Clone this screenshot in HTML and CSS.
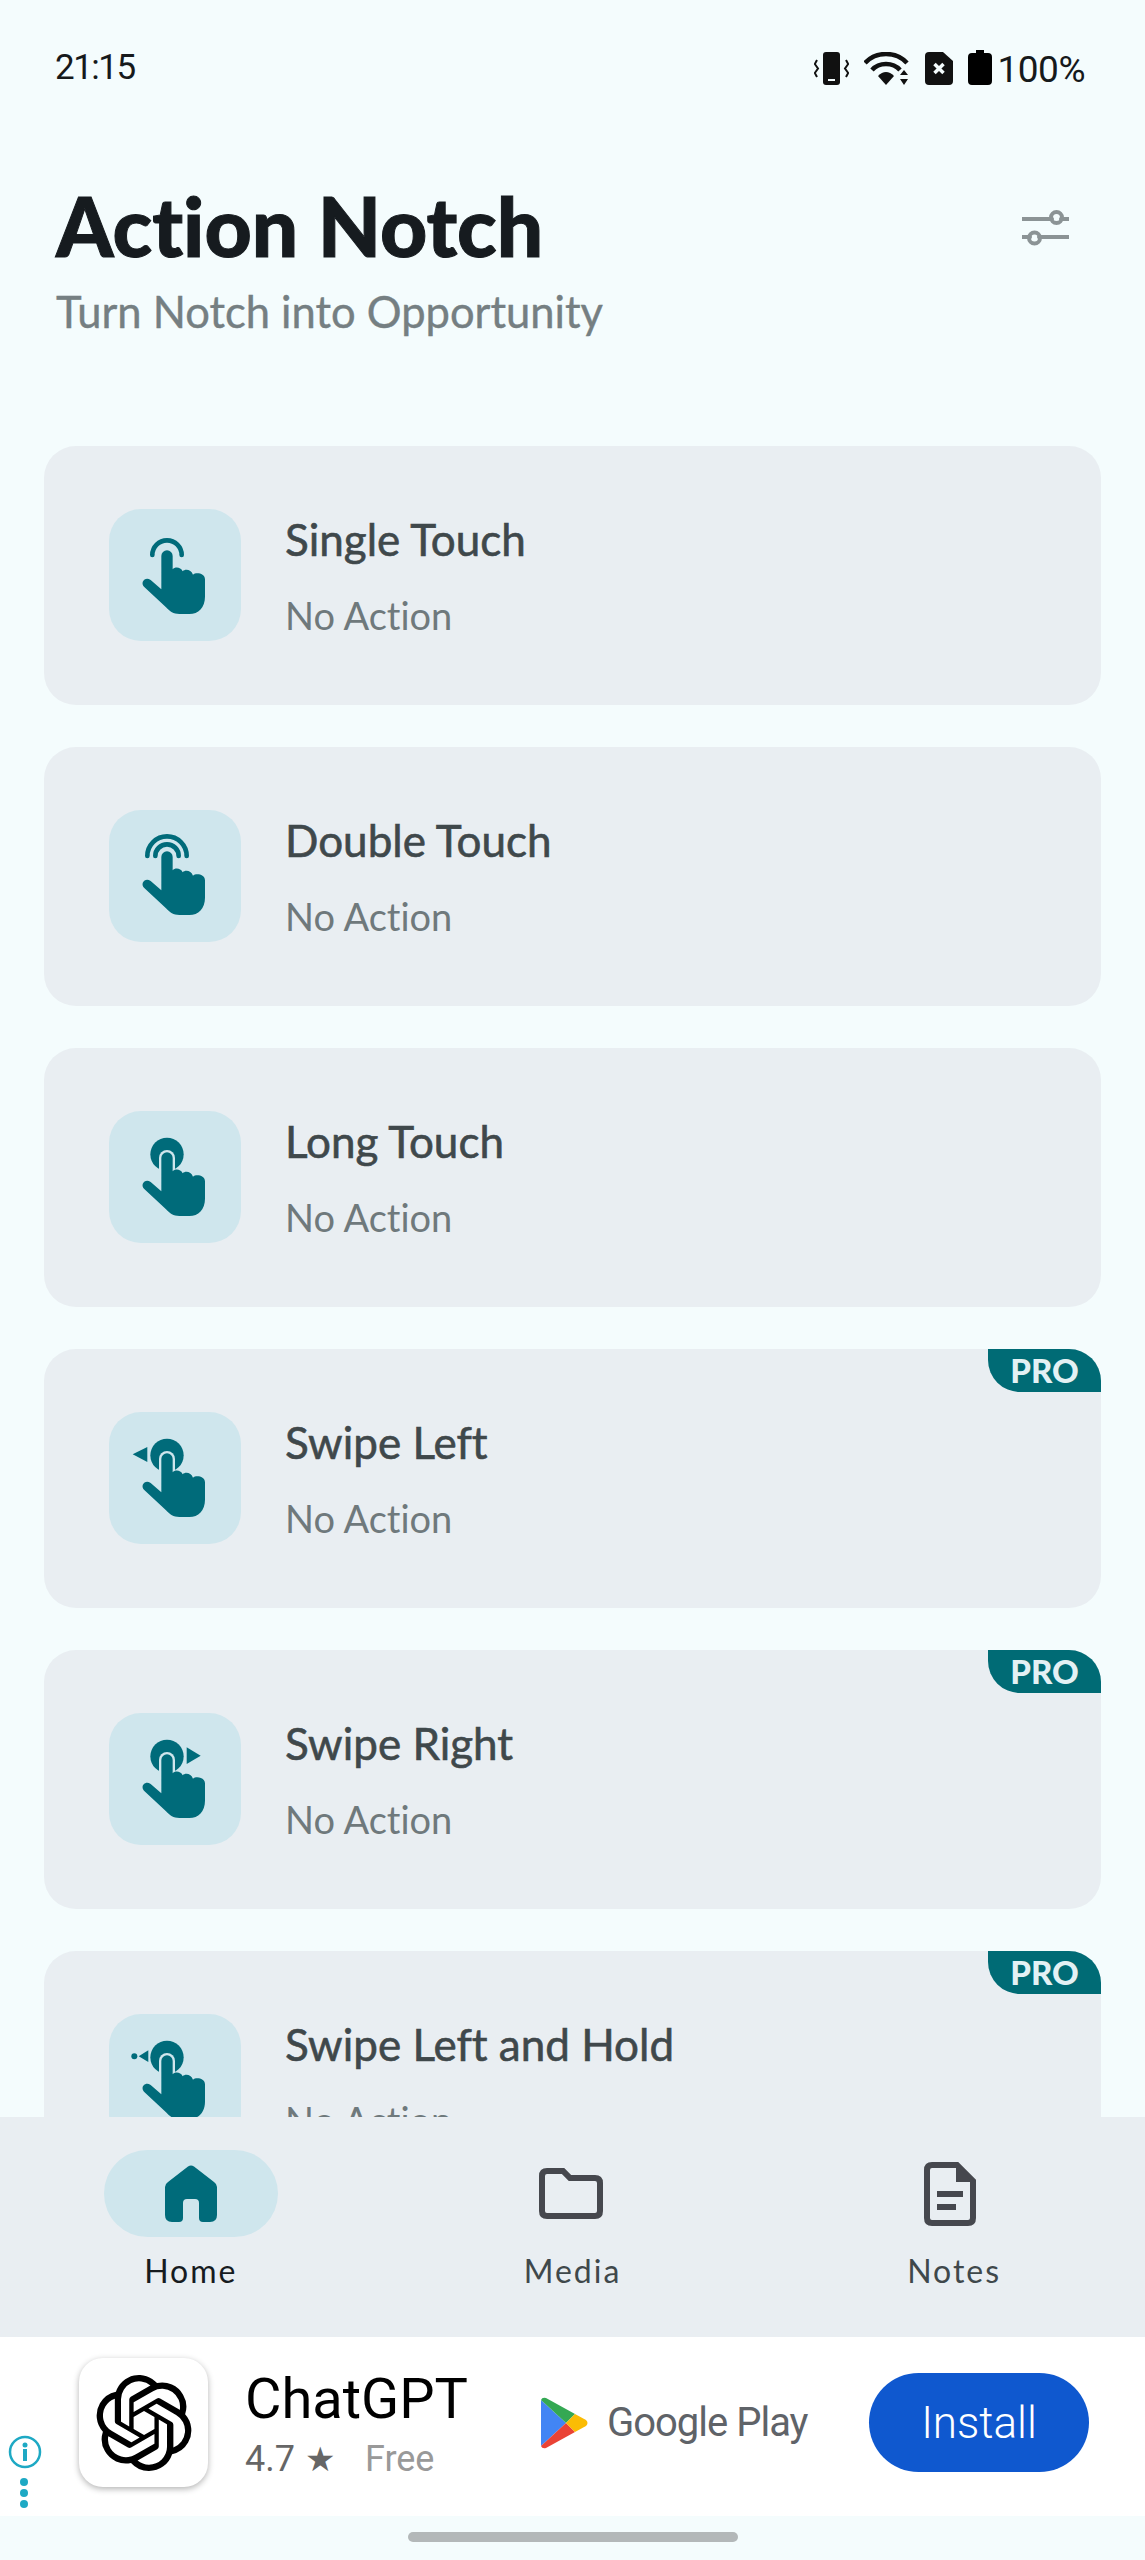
FILE: index.html
```html
<!doctype html>
<html lang="en">

<head>
	<meta charset="UTF-8" />
	<meta name="viewport" content="width=device-width, initial-scale=1.0" />
	<title>Action Notch</title>
	<link rel="stylesheet" href="styles.css">
</head>

<body>
	<svg class="defs" width="0" height="0">
		<symbol id="hand" viewBox="57 57 396 396">
			<path d="M214 198A17 17 0 0 1 248 198L248 238C254 230 272 230 278 244C285 236 304 238 309 254C318 246 345 250 345 268L345 320C345 352 325 372 298 372L268 372C250 372 240 365 228 352L162 290C150 278 165 258 182 270L214 298Z" />
		</symbol>
	</svg>

	<div class="status-bar">
		<span class="time">21:15</span>
		<div class="status-icons">
			<svg class="ic-vibrate" width="35" height="33" viewBox="0 0 35 33">
				<rect x="9" y="0" width="17" height="33" rx="3" />
				<rect x="14" y="27" width="7" height="2" fill="#f4fcfd" />
				<path d="M3 8L0.8 12L4 16.5L0.8 21L3 25M32 8L34.2 12L31 16.5L34.2 21L32 25" fill="none" stroke="#111" stroke-width="2" />
			</svg>
			<svg class="ic-wifi" width="45" height="33" viewBox="0 0 45 33">
				<g fill="none" stroke="#111" stroke-width="4.500">
					<path d="M1 11C12 -1 32 -1 43 11" />
					<path d="M8 18C15 10 29 10 36 18" />
				</g>
				<path d="M14 24C19 18.500 25 18.500 30 24L22 33Z" />
				<path d="M40 18L44 23L36 23ZM40 33L44 27L36 27Z" />
			</svg>
			<svg class="ic-sim" width="28" height="33" viewBox="0 0 28 33">
				<path d="M4 0L18 0L28 9L28 29Q28 33 24 33L4 33Q0 33 0 29L0 4Q0 0 4 0Z" />
				<path d="M9.500 12L18.500 21M18.500 12L9.500 21" stroke="#f4fcfd" stroke-width="3.500" />
			</svg>
			<svg class="ic-battery" width="24" height="35" viewBox="0 0 24 35">
				<path d="M8 0L16 0L16 3L20 3Q24 3 24 7L24 31Q24 35 20 35L4 35Q0 35 0 31L0 7Q0 3 4 3L8 3Z" fill="#000" />
			</svg>
			<span class="battery-text">100%</span>
		</div>
	</div>

	<header class="app-header">
		<div>
			<h1>Action Notch</h1>
			<p>Turn Notch into Opportunity</p>
		</div>
		<svg class="ic-settings" width="47" height="36" viewBox="0 0 47 36">
			<g fill="none" stroke="#8b9395" stroke-width="4">
				<path d="M0 9H30M39 9H47M0 27H8M17 27H47" stroke-linecap="round" />
				<circle cx="34.500" cy="7.500" r="5.500" />
				<circle cx="12.500" cy="28" r="5.500" />
			</g>
		</svg>
	</header>

	<main class="action-list">
		<div class="action-card">
			<div class="icon-box">
				<svg viewBox="57 57 396 396">
					<path d="M187 195A44 44 0 0 1 275 195" class="arc" />
					<use href="#hand" x="57" y="57" width="396" height="396" />
				</svg>
			</div>
			<div class="action-text">
				<h2>Single Touch</h2>
				<p>No Action</p>
			</div>
		</div>

		<div class="action-card">
			<div class="icon-box">
				<svg viewBox="57 57 396 396">
					<path d="M172 195A59 59 0 0 1 290 195" class="arc" />
					<path d="M196 195A35 35 0 0 1 266 195" class="arc" />
					<use href="#hand" x="57" y="57" width="396" height="396" />
				</svg>
			</div>
			<div class="action-text">
				<h2>Double Touch</h2>
				<p>No Action</p>
			</div>
		</div>

		<div class="action-card">
			<div class="icon-box">
				<svg viewBox="57 57 396 396">
					<circle cx="231" cy="187" r="50" />
					<path d="M231 198V280" class="halo" />
					<use href="#hand" x="57" y="57" width="396" height="396" />
				</svg>
			</div>
			<div class="action-text">
				<h2>Long Touch</h2>
				<p>No Action</p>
			</div>
		</div>

		<div class="action-card">
			<span class="pro-badge">PRO</span>
			<div class="icon-box">
				<svg viewBox="57 57 396 396">
					<circle cx="231" cy="187" r="50" />
					<path d="M128 184L172 162L172 207Z" />
					<path d="M231 198V280" class="halo" />
					<use href="#hand" x="57" y="57" width="396" height="396" />
				</svg>
			</div>
			<div class="action-text">
				<h2>Swipe Left</h2>
				<p>No Action</p>
			</div>
		</div>

		<div class="action-card">
			<span class="pro-badge">PRO</span>
			<div class="icon-box">
				<svg viewBox="57 57 396 396">
					<circle cx="231" cy="187" r="50" />
					<path d="M290 160L290 210L332 185Z" />
					<path d="M231 198V280" class="halo" />
					<use href="#hand" x="57" y="57" width="396" height="396" />
				</svg>
			</div>
			<div class="action-text">
				<h2>Swipe Right</h2>
				<p>No Action</p>
			</div>
		</div>

		<div class="action-card">
			<span class="pro-badge">PRO</span>
			<div class="icon-box">
				<svg viewBox="57 57 396 396">
					<circle cx="231" cy="187" r="50" />
					<path d="M146 184L175 166L175 201Z" />
					<circle cx="133" cy="184" r="9" />
					<path d="M231 198V280" class="halo" />
					<use href="#hand" x="57" y="57" width="396" height="396" />
				</svg>
			</div>
			<div class="action-text">
				<h2>Swipe Left and Hold</h2>
				<p>No Action</p>
			</div>
		</div>
	</main>

	<nav class="bottom-nav">
		<div class="nav-item active">
			<div class="nav-pill">
				<svg width="52" height="57" viewBox="0 0 52 57">
					<path d="M23 1.500Q26 -0.500 29 1.500L49 17Q52 19 52 22L52 50Q52 57 45 57L38 57Q34 57 34 53L34 38Q34 34 30 34L22 34Q18 34 18 38L18 53Q18 57 14 57L7 57Q0 57 0 50L0 22Q0 19 3 17Z" fill="#006b7a" />
				</svg>
			</div>
			<span>Home</span>
		</div>
		<div class="nav-item">
			<div class="nav-pill">
				<svg class="ic-folder" width="64" height="51" viewBox="0 0 64 51">
					<path d="M3 8Q3 3 8 3L24 3L31 10L56 10Q61 10 61 15L61 43Q61 48 56 48L8 48Q3 48 3 43Z" fill="none" stroke="#46484e" stroke-width="6" />
				</svg>
			</div>
			<span>Media</span>
		</div>
		<div class="nav-item">
			<div class="nav-pill">
				<svg class="ic-note" width="52" height="64" viewBox="0 0 52 64">
					<path d="M3 8Q3 3 8 3L33 3L49 19L49 56Q49 61 44 61L8 61Q3 61 3 56Z" fill="none" stroke="#46484e" stroke-width="6" />
					<path d="M33 3L33 19L49 19Z" fill="#46484e" stroke="#46484e" stroke-width="2" />
					<path d="M13 32H39M13 45H32" stroke="#46484e" stroke-width="6" />
				</svg>
			</div>
			<span>Notes</span>
		</div>
	</nav>

	<aside class="ad-banner">
		<div class="ad-info">
			<svg width="34" height="34" viewBox="0 0 34 34">
				<circle cx="17" cy="17" r="15" fill="none" stroke="#1ea9c4" stroke-width="2.500" />
				<circle cx="17" cy="10" r="2.500" fill="#1ea9c4" />
				<rect x="15" y="14" width="4" height="12" fill="#1ea9c4" />
			</svg>
			<i></i><i></i><i></i>
		</div>
		<div class="ad-app-icon">
			<svg width="96" height="96" viewBox="0 0 24 24">
				<path d="M22.2819 9.8211a5.9847 5.9847 0 0 0-.5157-4.9108 6.0462 6.0462 0 0 0-6.5098-2.9A6.0651 6.0651 0 0 0 4.9807 4.1818a5.9847 5.9847 0 0 0-3.9977 2.9 6.0462 6.0462 0 0 0 .7427 7.0966 5.98 5.98 0 0 0 .511 4.9107 6.051 6.051 0 0 0 6.5146 2.9001A5.9847 5.9847 0 0 0 13.2599 24a6.0557 6.0557 0 0 0 5.7718-4.2058 5.9894 5.9894 0 0 0 3.9977-2.9001 6.0557 6.0557 0 0 0-.7475-7.0729zm-9.022 12.6081a4.4755 4.4755 0 0 1-2.8764-1.0408l.1419-.0804 4.7783-2.7582a.7948.7948 0 0 0 .3927-.6813v-6.7369l2.02 1.1686a.071.071 0 0 1 .038.052v5.5826a4.504 4.504 0 0 1-4.4945 4.4944zm-9.6607-4.1254a4.4708 4.4708 0 0 1-.5346-3.0137l.142.0852 4.783 2.7582a.7712.7712 0 0 0 .7806 0l5.8428-3.3685v2.3324a.0804.0804 0 0 1-.0332.0615L9.74 19.9502a4.4992 4.4992 0 0 1-6.1408-1.6464zM2.3408 7.8956a4.485 4.485 0 0 1 2.3655-1.9728V11.6a.7664.7664 0 0 0 .3879.6765l5.8144 3.3543-2.0201 1.1685a.0757.0757 0 0 1-.071 0l-4.8303-2.7865A4.504 4.504 0 0 1 2.3408 7.872zm16.5963 3.8558L13.1038 8.364 15.1192 7.2a.0757.0757 0 0 1 .071 0l4.8303 2.7913a4.4944 4.4944 0 0 1-.6765 8.1042v-5.6772a.79.79 0 0 0-.407-.667zm2.0107-3.0231l-.142-.0852-4.7735-2.7818a.7759.7759 0 0 0-.7854 0L9.409 9.2297V6.8974a.0662.0662 0 0 1 .0284-.0615l4.8303-2.7866a4.4992 4.4992 0 0 1 6.6802 4.66zM8.3065 12.863l-2.02-1.1638a.0804.0804 0 0 1-.038-.0567V6.0742a4.4992 4.4992 0 0 1 7.3757-3.4537l-.142.0805L8.704 5.459a.7948.7948 0 0 0-.3927.6813zm1.0976-2.3654l2.602-1.4998 2.6069 1.4998v2.9994l-2.5974 1.4997-2.6067-1.4997Z" />
			</svg>
		</div>
		<div class="ad-text">
			<div class="ad-name">ChatGPT</div>
			<div class="ad-meta"><span class="rating">4.7</span><span class="star">★</span><span class="price">Free</span></div>
		</div>
		<div class="ad-store">
			<svg width="49" height="52" viewBox="0 0 49 52">
				<path d="M1 3L1 49L26 26Z" fill="#4285f4" />
				<path d="M1 3Q2 0 6 1L35 17L26 26Z" fill="#34a853" />
				<path d="M1 49Q2 52 6 51L35 35L26 26Z" fill="#ea4335" />
				<path d="M35 17L46 23Q49 26 46 29L35 35L26 26Z" fill="#fbbc04" />
			</svg>
			<span>Google Play</span>
		</div>
		<button type="button" class="install-btn">Install</button>
	</aside>

	<div class="gesture-area"><div class="gesture-bar"></div></div>
</body>

</html>
```

FILE: styles.css
```css
* {
	box-sizing: border-box;
}

body {
	margin: 0;
	width: 1145px;
	height: 2560px;
	overflow: hidden;
	display: flex;
	flex-direction: column;
	background-color: #f4fcfd;
	font-family: Lato, "Noto Sans", sans-serif;
	font-variant-ligatures: none;
}

.defs {
	position: absolute;
}

/* status bar */
.status-bar {
	height: 100px;
	padding: 50px 60px 0 55px;
	display: flex;
	justify-content: space-between;
	align-items: flex-start;
	font-family: Roboto, sans-serif;
	color: #16191b;
}

.time {
	font-size: 35px;
	line-height: 36px;
	letter-spacing: -1.500px;
}

.status-icons {
	display: flex;
	align-items: flex-start;
	fill: #111;
}

.ic-vibrate {
	margin-top: 2px;
}

.ic-wifi {
	margin: 2px 0 0 15px;
}

.ic-sim {
	margin: 2px 0 0 16px;
}

.ic-battery {
	margin: 0 0 0 15px;
}

.battery-text {
	margin-left: 6px;
	font-size: 37px;
	line-height: 40px;
	letter-spacing: -0.500px;
}

/* header */
.app-header {
	padding: 80px 76px 0 56px;
	height: 346px;
	display: flex;
	justify-content: space-between;
	align-items: flex-start;
}

.app-header h1 {
	margin: 0;
	font-size: 82px;
	line-height: 90px;
	font-weight: 900;
	color: #161b1f;
	-webkit-text-stroke: 1px #161b1f;
}

.app-header p {
	margin: 16px 0 0;
	font-size: 43.500px;
	line-height: 50px;
	color: #757f82;
	-webkit-text-stroke: 0.400px #757f82;
}

.ic-settings {
	margin-top: 30px;
}

/* list */
.action-list {
	flex: 1;
	min-height: 0;
	overflow: hidden;
	padding: 0 44px;
	display: flex;
	flex-direction: column;
	gap: 42px;
}

.action-card {
	position: relative;
	flex: none;
	height: 259px;
	padding: 63px 65px;
	display: flex;
	gap: 44px;
	background-color: #e9eef2;
	border-radius: 32px;
}

.icon-box {
	flex: none;
	width: 132px;
	height: 132px;
	border-radius: 32px;
	background-color: #cfe6ed;
	fill: #006b7a;
}

.icon-box svg {
	display: block;
	width: 132px;
	height: 132px;
}

.arc {
	fill: none;
	stroke: #006b7a;
	stroke-width: 14;
	stroke-linecap: round;
}

.halo {
	fill: none;
	stroke: #cfe6ed;
	stroke-width: 48;
	stroke-linecap: round;
}

.action-text {
	padding-top: 5px;
}

.action-text h2 {
	margin: 0;
	font-size: 44px;
	line-height: 50px;
	font-weight: 400;
	color: #3f484b;
	-webkit-text-stroke: 0.600px #3f484b;
}

.action-text p {
	margin: 29px 0 0;
	font-size: 38px;
	line-height: 44px;
	color: #6f797c;
}

.pro-badge {
	position: absolute;
	top: 0;
	right: 0;
	width: 113px;
	height: 43px;
	border-radius: 0 32px 0 32px;
	background-color: #006b75;
	color: #e3f1f4;
	font-size: 33px;
	line-height: 43px;
	font-weight: 900;
	text-align: center;
}

/* bottom navigation */
.bottom-nav {
	height: 220px;
	padding-top: 33px;
	display: grid;
	grid-template-columns: repeat(3, 1fr);
	align-items: start;
	background-color: #e9eef2;
}

.nav-item {
	display: flex;
	flex-direction: column;
	align-items: center;
	color: #3f484b;
	font-size: 32px;
	line-height: 40px;
	letter-spacing: 2px;
}

.nav-item.active {
	color: #161b1f;
}

.nav-pill {
	width: 174px;
	height: 87px;
	margin-bottom: 14px;
	display: flex;
	align-items: center;
	justify-content: center;
	border-radius: 44px;
}

.active .nav-pill {
	background-color: #cfe6ed;
}

.ic-folder {
	margin-left: -2px;
}

.ic-note {
	margin-right: 8px;
}

/* ad */
.ad-banner {
	height: 179px;
	padding-bottom: 8px;
	display: flex;
	align-items: center;
	background-color: #fff;
	font-family: Roboto, sans-serif;
}

.ad-info {
	width: 79px;
	flex: none;
	align-self: flex-end;
	padding: 0 0 0 8px;
	display: flex;
	flex-direction: column;
}

.ad-info i {
	width: 8px;
	height: 8px;
	margin: 3px 0 0 12px;
	border-radius: 50%;
	background-color: #1ea9c4;
}

.ad-info svg {
	margin-bottom: 6px;
}

.ad-app-icon {
	flex: none;
	width: 129px;
	height: 129px;
	display: flex;
	align-items: center;
	justify-content: center;
	border-radius: 24px;
	background-color: #fff;
	box-shadow: 0 2px 6px rgba(0, 0, 0, 0.3);
}

.ad-text {
	width: 340px;
	padding-left: 37px;
	flex: none;
}

.ad-name {
	font-size: 56px;
	line-height: 60px;
	color: #000;
}

.ad-meta {
	display: flex;
	align-items: center;
	font-size: 36px;
	line-height: 44px;
	margin-top: 8px;
	margin-bottom: -4px;
	color: #666;
}

.star {
	margin-left: 10px;
	font-size: 34px;
}

.price {
	margin-left: 30px;
	color: #999;
}

.ad-store {
	flex: none;
	width: 329px;
	margin-left: -8px;
	display: flex;
	align-items: center;
	gap: 18px;
	font-size: 40px;
	letter-spacing: -1px;
	color: #5f6368;
}

.install-btn {
	flex: none;
	width: 220px;
	height: 99px;
	border: none;
	border-radius: 50px;
	background-color: #0f58cf;
	color: white;
	font-family: Roboto, sans-serif;
	font-size: 44px;
	font-weight: 300;
}

/* gesture bar */
.gesture-area {
	height: 44px;
	padding-top: 16px;
	display: flex;
	justify-content: center;
	align-items: flex-start;
}

.gesture-bar {
	width: 330px;
	height: 10px;
	border-radius: 5px;
	background-color: #b3b8b9;
}
```
